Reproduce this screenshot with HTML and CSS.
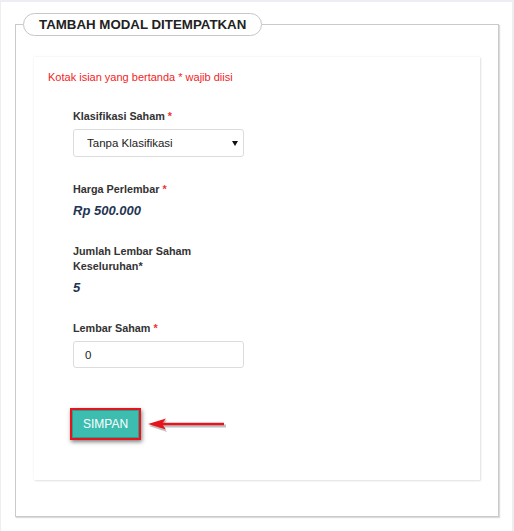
FILE: index.html
```html
<!DOCTYPE HTML>
<html lang="id">
<head>
    <meta charset="UTF-8">
    <meta name="viewport" content="width=device-width, initial-scale=1">
    <title>Tambah Modal Ditempatkan</title>
    <link rel="stylesheet" href="styles.css">
</head>
<body>

<div class="page">
    <fieldset class="panel">
        <legend class="panel-title">TAMBAH MODAL DITEMPATKAN</legend>

        <div class="card">
            <p class="note">Kotak isian yang bertanda * wajib diisi</p>

            <div class="form">
                <div class="form-group">
                    <label for="klasifikasi">Klasifikasi Saham <span class="req">*</span></label>
                    <div class="select-wrap">
                        <select id="klasifikasi">
                            <option>Tanpa Klasifikasi</option>
                        </select>
                    </div>
                </div>

                <div class="form-group">
                    <label>Harga Perlembar <span class="req">*</span></label>
                    <div class="value">Rp 500.000</div>
                </div>

                <div class="form-group">
                    <label>Jumlah Lembar Saham Keseluruhan*</label>
                    <div class="value">5</div>
                </div>

                <div class="form-group">
                    <label for="lembar">Lembar Saham <span class="req">*</span></label>
                    <input type="text" id="lembar" value="0">
                </div>

                <!-- tombol simpan + panah penanda -->
                <div class="actions">
                    <button class="btn-save">SIMPAN</button>
                    <svg class="arrow" width="82" height="16" viewBox="0 0 82 16">
                        <line x1="12" y1="9" x2="79" y2="9" stroke="rgba(0,0,0,0.25)" stroke-width="3"/>
                        <polygon points="2,9 20,3 16,9 20,15" fill="rgba(0,0,0,0.25)"/>
                        <line x1="12" y1="7" x2="77" y2="7" stroke="#e8141c" stroke-width="2.5"/>
                        <polygon points="1,7 19,1.5 15,7 19,12.5" fill="#e8141c"/>
                    </svg>
                </div>
            </div>
        </div>
    </fieldset>
</div>

</body>
</html>
```

FILE: styles.css
```css
body {
    margin: 0;
    background-color: #eceef2;
    font-family: "Liberation Sans", Arial, sans-serif;
}
.page {
    background: white;
    margin: 2px 2px 0 1px;
    padding: 11px 0 13px 14px;
    height: 505px;
}
.panel {
    margin: 0 13px 0 0;
    padding: 0 18px 36px 18px;
    border: 1px solid #cacaca;
    box-shadow: 1px 1px 1px #dcdcdc;
}
.panel-title {
    margin-left: -11px;
    padding: 0 15px;
    border: 1px solid #c6c6c6;
    border-radius: 12px;
    background: white;
    font-size: 13.3px;
    font-weight: bold;
    line-height: 21px;
    color: #222;
}
.card {
    margin-top: 21px;
    padding: 13px 14px 40px 14px;
    background: white;
    box-shadow: 0 0 2px rgba(0, 0, 0, 0.08), 1px 1px 2px rgba(0, 0, 0, 0.1);
}
.note {
    margin: 0;
    font-size: 11px;
    line-height: 15px;
    color: #f01e1e;
}
.form {
    width: 171px;
    margin: 24px 0 0 25px;
}
.form-group {
    margin-bottom: 25px;
}
.form-group label {
    display: block;
    margin-bottom: 5px;
    font-size: 10.8px;
    font-weight: bold;
    line-height: 15px;
    color: #333;
}
.req {
    color: #e33;
}
.value {
    font-size: 13px;
    font-weight: bold;
    font-style: italic;
    line-height: 17px;
    color: #1f3553;
}
.select-wrap {
    position: relative;
}
.select-wrap::after {
    content: "";
    position: absolute;
    right: 6px;
    top: 12px;
    border-left: 3.5px solid transparent;
    border-right: 3.5px solid transparent;
    border-top: 5px solid #111;
    pointer-events: none;
}
select, input {
    display: block;
    box-sizing: border-box;
    width: 171px;
    height: 28px;
    border: 1px solid #dcdcdc;
    border-radius: 3px;
    background: white;
    font-family: "Liberation Sans", Arial, sans-serif;
    font-size: 11.5px;
    color: #222;
    outline: none;
}
select {
    -webkit-appearance: none;
    appearance: none;
    padding: 0 0 0 13px;
}
input {
    height: 27px;
    padding: 0 0 0 11px;
}
.actions {
    display: flex;
    align-items: center;
    margin-top: 40px;
}
.btn-save {
    box-sizing: border-box;
    height: 32px;
    padding: 0 11px;
    margin-left: -3px;
    border: 2px solid #e8141c;
    background: #3cbdb0;
    box-shadow: inset 0 0 0 1px #2a9e93, 1px 2px 4px rgba(0, 0, 0, 0.5);
    color: white;
    font-family: "Liberation Sans", Arial, sans-serif;
    font-size: 12px;
    cursor: pointer;
}
.arrow {
    display: block;
    margin: 2px 0 0 6px;
}
```
